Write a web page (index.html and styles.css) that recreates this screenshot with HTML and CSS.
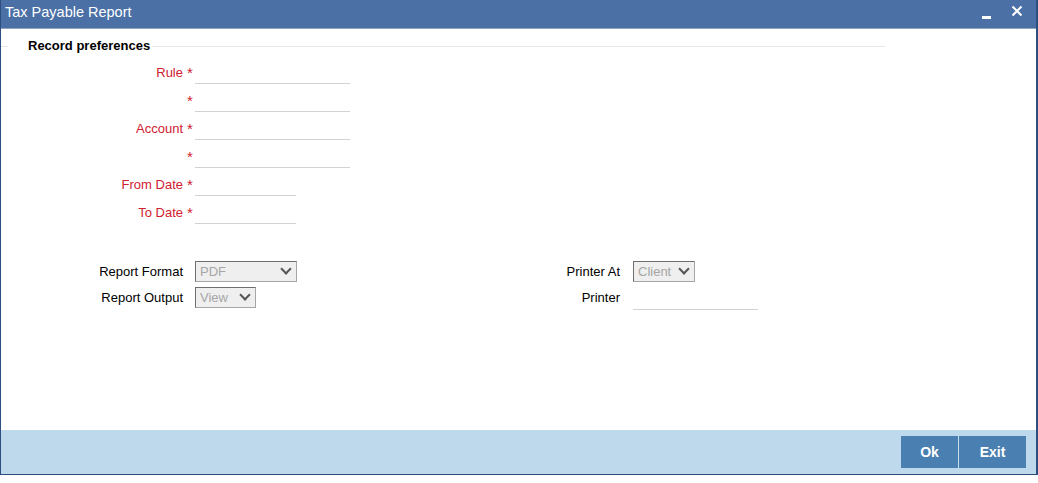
FILE: index.html
```html
<!DOCTYPE html>
<html lang="en">
<head>
  <meta charset="UTF-8">
  <title>Tax Payable Report</title>
  <link rel="stylesheet" href="styles.css">
</head>
<body>
  <div class="window">
    <div class="title-bar">
      <span class="title">Tax Payable Report</span>
      <div class="win-buttons">
        <span class="minimize"></span>
        <svg class="close" width="12" height="12" viewBox="0 0 12 12">
          <path d="M1.5 1.5 L10.5 10.5 M10.5 1.5 L1.5 10.5" stroke="#fff" stroke-width="2"/>
        </svg>
      </div>
    </div>

    <div class="content">
      <div class="legend-row">
        <span class="legend-line short"></span>
        <span class="legend">Record preferences</span>
        <span class="legend-line"></span>
      </div>

      <!-- Pflichtfelder -->
      <div class="fields">
        <div class="row"><label class="req">Rule</label><span class="star">*</span><input type="text" class="text wide"></div>
        <div class="row"><label class="req"></label><span class="star">*</span><input type="text" class="text wide"></div>
        <div class="row"><label class="req">Account</label><span class="star">*</span><input type="text" class="text wide"></div>
        <div class="row"><label class="req"></label><span class="star">*</span><input type="text" class="text wide"></div>
        <div class="row"><label class="req">From Date</label><span class="star">*</span><input type="text" class="text date"></div>
        <div class="row"><label class="req">To Date</label><span class="star">*</span><input type="text" class="text date"></div>
      </div>

      <!-- Report Optionen -->
      <div class="options">
        <div class="opt-col">
          <div class="opt-row">
            <label>Report Format</label>
            <div class="select fmt">PDF<span class="arrow"></span></div>
          </div>
          <div class="opt-row">
            <label>Report Output</label>
            <div class="select out">View<span class="arrow"></span></div>
          </div>
        </div>
        <div class="opt-col right">
          <div class="opt-row">
            <label>Printer At</label>
            <div class="select prn">Client<span class="arrow"></span></div>
          </div>
          <div class="opt-row">
            <label>Printer</label>
            <input type="text" class="text printer">
          </div>
        </div>
      </div>
    </div>

    <div class="footer">
      <button class="btn">Ok</button>
      <button class="btn">Exit</button>
    </div>
  </div>
</body>
</html>
```

FILE: styles.css
```css
* {
  margin: 0;
  padding: 0;
  box-sizing: border-box;
}

body {
  font-family: "Liberation Sans", Arial, sans-serif;
  font-size: 13px;
  background-color: #fff;
  width: 1038px;
  height: 483px;
  overflow: hidden;
}

.window {
  width: 1038px;
  height: 475px;
  border-left: 1px solid #2c4f80;
  border-right: 2px solid #2c4f80;
  border-bottom: 1px solid #2c4f80;
  display: flex;
  flex-direction: column;
}

.title-bar {
  height: 29px;
  background-color: #4a70a6;
  border-bottom: 1px solid #8fa6bd;
  display: flex;
  align-items: center;
  justify-content: space-between;
  padding: 0 13px 4px 4px;
  color: #fff;
}

.title {
  font-size: 14.5px;
}

.win-buttons {
  display: flex;
  align-items: center;
  gap: 20px;
}

.minimize {
  width: 9px;
  height: 3px;
  background: #fff;
  margin-top: 10px;
}

.close {
  margin-top: -2px;
}

.content {
  flex: 1;
}

.legend-row {
  display: flex;
  align-items: center;
  width: 884px;
  height: 16px;
  margin-top: 8px;
}

.legend-line {
  flex: 1;
  height: 1px;
  background: #e6e6e6;
  margin-top: 2px;
}

.legend-line.short {
  flex: none;
  width: 7px;
}

.legend {
  font-weight: bold;
  padding: 0 2px 0 20px;
}

.fields {
  margin-top: 3px;
}

.row {
  display: flex;
  align-items: flex-end;
  height: 28px;
}

.row label {
  width: 182px;
  text-align: right;
  padding-bottom: 4px;
}

.req {
  color: #d0202f;
}

.star {
  color: #d0202f;
  font-size: 15px;
  width: 12px;
  padding-left: 4px;
  padding-bottom: 3px;
}

.text {
  border: none;
  border-bottom: 1px solid #d2d2d2;
  height: 24px;
  font-family: inherit;
  font-size: 13px;
  outline: none;
}

.wide {
  width: 155px;
}

.date {
  width: 101px;
}

.options {
  display: flex;
  margin-top: 34px;
}

.opt-col {
  width: 510px;
}

.opt-col.right {
  width: auto;
}

.opt-row {
  display: flex;
  align-items: center;
  height: 26px;
}

.opt-col label {
  width: 194px;
  text-align: right;
  padding-right: 12px;
  white-space: nowrap;
}

.opt-col.right label {
  width: 122px;
  padding-right: 13px;
}

.select {
  height: 21px;
  border: 1px solid #a6a6a6;
  border-top-color: #6e6e6e;
  border-left-color: #6e6e6e;
  background: #efefef;
  color: #a6a6a6;
  font-size: 13px;
  display: flex;
  align-items: center;
  justify-content: space-between;
  padding: 0 4px;
}

.arrow {
  width: 8px;
  height: 8px;
  border-right: 2px solid #555;
  border-bottom: 2px solid #555;
  transform: rotate(45deg);
  margin-top: -5px;
  margin-right: 2px;
}

.fmt {
  width: 102px;
}

.out {
  width: 61px;
}

.prn {
  width: 62px;
}

.printer {
  width: 125px;
  margin-top: 1px;
}

.footer {
  height: 44px;
  background-color: #bed9ec;
  display: flex;
  justify-content: flex-end;
  align-items: center;
  padding-right: 10px;
}

.btn {
  height: 32px;
  background-color: #4a80b1;
  color: #fff;
  border: none;
  border-left: 1px solid #c8dcec;
  font-family: inherit;
  font-size: 14px;
  font-weight: bold;
}

.btn:first-child {
  width: 57px;
  border-left: none;
}

.btn:last-child {
  width: 68px;
}
```
